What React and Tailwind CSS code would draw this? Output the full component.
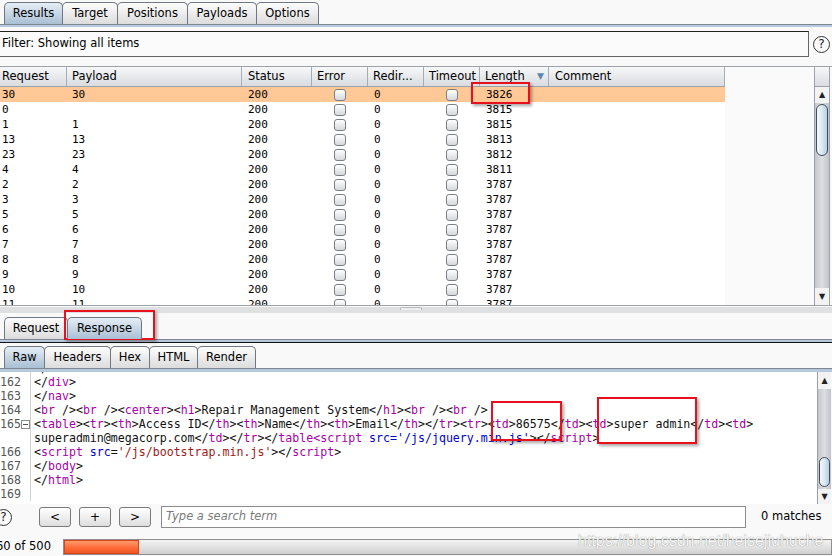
import React from 'react';

// top-level tabs (Intruder attack window)
const topTabs = [
  { label: 'Results', w: 'w-[59px]', active: true },
  { label: 'Target', w: 'w-[56px]' },
  { label: 'Positions', w: 'w-[71px]' },
  { label: 'Payloads', w: 'w-[70px]' },
  { label: 'Options', w: 'w-[63px]' },
];

const msgTabs = [
  { label: 'Request', w: 'w-[64px]' },
  { label: 'Response', w: 'w-[75px]', active: true },
];

const viewTabs = [
  { label: 'Raw', w: 'w-[41px]', active: true },
  { label: 'Headers', w: 'w-[67px]' },
  { label: 'Hex', w: 'w-[40px]' },
  { label: 'HTML', w: 'w-[49px]' },
  { label: 'Render', w: 'w-[59px]' },
];

const cols = [
  { name: 'Request', w: 'w-[67px]', pl: 'pl-[2px]' },
  { name: 'Payload', w: 'w-[175px]', pl: 'pl-[5px]' },
  { name: 'Status', w: 'w-[70px]', pl: 'pl-[6px]' },
  { name: 'Error', w: 'w-[56px]', pl: 'pl-[5px]' },
  { name: 'Redir...', w: 'w-[56px]', pl: 'pl-[5px]' },
  { name: 'Timeout', w: 'w-[56px]', pl: 'pl-[5px]' },
  { name: 'Length', w: 'w-[69px]', pl: 'pl-[5px]', sort: true },
  { name: 'Comment', w: 'w-[176px]', pl: 'pl-[6px]' },
];

const rows = [
  ['30', '30', '3826'],
  ['0', '', '3815'],
  ['1', '1', '3815'],
  ['13', '13', '3813'],
  ['23', '23', '3812'],
  ['4', '4', '3811'],
  ['2', '2', '3787'],
  ['3', '3', '3787'],
  ['5', '5', '3787'],
  ['6', '6', '3787'],
  ['7', '7', '3787'],
  ['8', '8', '3787'],
  ['9', '9', '3787'],
  ['10', '10', '3787'],
  ['11', '11', '3787'],
];

const tokColor = {
  p: 'text-[#111]',
  t: 'text-[#a800a8]',
  a: 'text-[#0000cc]',
  s: 'text-[#a01818]',
};

const code = [
  { n: '161', t: [['p', '</'], ['t', 'ul'], ['p', '>']] },
  { n: '162', t: [['p', '</'], ['t', 'div'], ['p', '>']] },
  { n: '163', t: [['p', '</'], ['t', 'nav'], ['p', '>']] },
  {
    n: '164',
    t: [
      ['p', '<'], ['t', 'br'], ['p', ' /><'], ['t', 'br'], ['p', ' /><'], ['t', 'center'],
      ['p', '><'], ['t', 'h1'], ['p', '>Repair Management System</'], ['t', 'h1'],
      ['p', '><'], ['t', 'br'], ['p', ' /><'], ['t', 'br'], ['p', ' />'],
    ],
  },
  {
    n: '165',
    fold: true,
    t: [
      ['p', '<'], ['t', 'table'], ['p', '><'], ['t', 'tr'], ['p', '><'], ['t', 'th'],
      ['p', '>Access ID</'], ['t', 'th'], ['p', '><'], ['t', 'th'], ['p', '>Name</'], ['t', 'th'],
      ['p', '><'], ['t', 'th'], ['p', '>Email</'], ['t', 'th'], ['p', '></'], ['t', 'tr'],
      ['p', '><'], ['t', 'tr'], ['p', '><'], ['t', 'td'], ['p', '>86575</'], ['t', 'td'],
      ['p', '><'], ['t', 'td'], ['p', '>super admin</'], ['t', 'td'], ['p', '><'], ['t', 'td'], ['p', '>'],
    ],
  },
  {
    n: '',
    t: [
      ['p', 'superadmin@megacorp.com</'], ['t', 'td'], ['p', '></'], ['t', 'tr'], ['p', '></'],
      ['t', 'table<script'], ['p', ' '], ['a', "src='/js/jquery.min.js'"], ['p', '></'], ['t', 'script'], ['p', '>'],
    ],
  },
  {
    n: '166',
    t: [
      ['p', '<'], ['t', 'script'], ['p', ' '], ['a', 'src'], ['p', '='], ['s', "'/js/bootstrap.min.js'"],
      ['p', '></'], ['t', 'script'], ['p', '>'],
    ],
  },
  { n: '167', t: [['p', '</'], ['t', 'body'], ['p', '>']] },
  { n: '168', t: [['p', '</'], ['t', 'html'], ['p', '>']] },
  { n: '169', t: [] },
];

function Tab({ label, w, active, first }) {
  return (
    <div
      className={`${w} h-[22px] flex items-center justify-center rounded-t-[5px] border border-b-0 border-[#6f7782] text-[11.5px] leading-none ${
        first ? '' : '-ml-px'
      } ${active ? 'relative z-10 bg-linear-to-b from-[#e6eef6] to-[#a9bfd4]' : 'bg-linear-to-b from-[#fdfdfd] to-[#dcdcdc]'}`}
    >
      {label}
    </div>
  );
}

function TabStrip({ tabs }) {
  return (
    <div className="flex items-end h-[22px] pl-[4px]">
      {tabs.map((t, i) => (
        <Tab key={t.label} {...t} first={i === 0} />
      ))}
    </div>
  );
}

function Check() {
  return <div className="w-[12px] h-[12px] rounded-[3px] border border-[#7b7f86] bg-linear-to-b from-white to-[#d6d8dc]" />;
}

function HelpIcon() {
  return (
    <div className="w-[17px] h-[17px] rounded-full border-[1.5px] border-[#333] flex items-center justify-center text-[12px] leading-none text-[#222]">
      ?
    </div>
  );
}

function ArrowBtn({ up, h }) {
  return (
    <div className={`${h} w-full flex items-center justify-center bg-[#f3f3f3] text-[8px] leading-none text-[#222]`}>
      {up ? '▲' : '▼'}
    </div>
  );
}

function VScroll({ upH, downH, thumbMt, thumbH }) {
  return (
    <div className="h-full w-full flex flex-col border-l border-[#9aa0a8]">
      <ArrowBtn up h={upH} />
      <div className="flex-1 bg-linear-to-r from-[#c4c7cc] via-[#dcdee1] to-[#c0c3c8] px-[1px]">
        <div
          className={`${thumbMt} ${thumbH} rounded-[7px] border border-[#3f4c5a] bg-linear-to-r from-[#f4f8fc] via-[#dbe8f4] to-[#b6cfe6]`}
        />
      </div>
      <ArrowBtn h={downH} />
    </div>
  );
}

function ResultsTable() {
  return (
    <div className="flex h-[240px] border-t border-b border-[#9ea3aa]">
      <div className="w-[814px] flex flex-col bg-[#fafafa] overflow-hidden">
        <div className="flex h-[20px] w-[725px] shrink-0 border-b border-[#9ea3aa] bg-linear-to-b from-[#f7f8f9] to-[#d9dce1] text-[11.5px]">
          {cols.map((c) => (
            <div
              key={c.name}
              className={`${c.w} ${c.pl} flex items-center justify-between pr-[4px] border-r border-[#a8adb5] whitespace-nowrap`}
            >
              <span>{c.name}</span>
              {c.sort && <span className="text-[9px] text-[#5f86ad]">▼</span>}
            </div>
          ))}
        </div>
        <div className="w-[725px] font-['DejaVu_Sans_Mono',monospace] text-[11px]">
          {rows.map((r, i) => (
            <div key={i} className={`flex h-[15px] leading-[15px] ${i === 0 ? 'bg-[#ffc896]' : 'bg-white'}`}>
              <div className="w-[67px] pl-[2px]">{r[0]}</div>
              <div className="w-[175px] pl-[5px]">{r[1]}</div>
              <div className="w-[70px] pl-[6px]">200</div>
              <div className="w-[56px] flex items-center justify-center">
                <Check />
              </div>
              <div className="w-[56px] pl-[6px]">0</div>
              <div className="w-[56px] flex items-center justify-center">
                <Check />
              </div>
              <div className="w-[69px] pl-[6px]">{r[2]}</div>
              <div className="w-[176px]" />
            </div>
          ))}
        </div>
      </div>
      <div className="w-[16px] flex flex-col border-r border-[#9ea3aa]">
        <div className="h-[20px] shrink-0 border-b border-l border-[#9ea3aa] bg-linear-to-b from-[#f7f8f9] to-[#d9dce1]" />
        <div className="flex-1">
          <VScroll upH="h-[16px]" downH="h-[17px]" thumbMt="mt-[1px]" thumbH="h-[52px]" />
        </div>
      </div>
    </div>
  );
}

function CodeView() {
  return (
    <div className="flex h-[132px]">
      <div className="w-[817px] bg-white overflow-hidden">
        <div className="-mt-[11px] font-['DejaVu_Sans_Mono',monospace] text-[11.6px]">
          {code.map((l, i) => (
            <div key={i} className="flex h-[14px] leading-[14px]">
              <div className="w-[31px] shrink-0 flex border-r border-[#d0d0d0] text-[#555]">
                <div className="w-[20px] pr-[1px] text-right whitespace-nowrap">{l.n}</div>
                <div className="w-[10px] flex items-center justify-center">
                  {l.fold && (
                    <div className="w-[9px] h-[9px] border border-[#8a8a8a] flex items-center justify-center">
                      <div className="w-[5px] h-px bg-[#555]" />
                    </div>
                  )}
                </div>
              </div>
              <div className="pl-[3px] whitespace-pre">
                {l.t.map(([k, s], j) => (
                  <span key={j} className={tokColor[k]}>
                    {s}
                  </span>
                ))}
              </div>
            </div>
          ))}
        </div>
      </div>
      <div className="w-[14px]">
        <VScroll upH="h-[17px]" downH="h-[15px]" thumbMt="mt-[68px]" thumbH="h-[30px]" />
      </div>
    </div>
  );
}

function Btn({ children }) {
  return (
    <div className="w-[32px] h-[20px] rounded-[3px] border border-[#7a7a7a] bg-linear-to-b from-white to-[#dedede] flex items-center justify-center text-[12px] leading-none">
      {children}
    </div>
  );
}

function RedBox({ className }) {
  return <div className={`absolute border-2 border-[#e8101c] shadow-[2px_2px_3px_rgba(0,0,0,0.35)] ${className}`} />;
}

export default function App() {
  return (
    <div className="relative w-[832px] h-[556px] overflow-hidden bg-[#f9f9f9] text-black font-['DejaVu_Sans',sans-serif]">
      {/* main tabs */}
      <div className="pt-[2px]">
        <TabStrip tabs={topTabs} />
      </div>
      <div className="h-[3px] bg-[#b6c8da] border-t border-[#7d8894]" />
      <div className="h-[4px]" />

      {/* filter */}
      <div className="flex h-[26px]">
        <div className="w-[809px] h-full border border-l-0 border-[#666] border-t-[#222] bg-[#fbfbfb] flex items-center pl-[2px] text-[11.5px]">
          Filter: Showing all items
        </div>
        <div className="flex-1 flex items-center justify-center pl-[2px]">
          <HelpIcon />
        </div>
      </div>
      <div className="h-[9px]" />

      <ResultsTable />

      {/* split pane divider */}
      <div className="h-[6px] bg-[#dfe0e2] pl-[400px]">
        <div className="w-[22px] h-[3px] mt-[1px] rounded-t-[2px] border border-b-0 border-[#b5b8bd] bg-[#eeeeee]" />
      </div>
      <div className="h-[4px]" />

      {/* request / response */}
      <TabStrip tabs={msgTabs} />
      <div className="h-[3px] bg-[#b6c8da] border-t border-[#7d8894]" />
      <div className="border-t border-[#111] pt-[3px]">
        <TabStrip tabs={viewTabs} />
      </div>
      <div className="h-[4px] bg-[#b6c8da] border-t border-[#7d8894]" />

      <CodeView />

      {/* search bar */}
      <div className="flex items-center h-[26px]">
        <div className="-ml-[5px] w-[17px]">
          <HelpIcon />
        </div>
        <div className="ml-[27px] flex gap-[8px]">
          <Btn>&lt;</Btn>
          <Btn>+</Btn>
          <Btn>&gt;</Btn>
        </div>
        <div className="ml-[10px] w-[585px] h-[22px] border border-[#8c8c8c] bg-white flex items-center pl-[4px] text-[11.5px] italic text-[#7a7a7a]">
          Type a search term
        </div>
        <div className="ml-[15px] text-[11.5px]">0 matches</div>
      </div>

      {/* progress */}
      <div className="flex items-center h-[16px] mt-[9px]">
        <div className="-ml-[4px] w-[67px] text-[11.5px] whitespace-nowrap">60 of 500</div>
        <div className="w-[770px] h-full border border-[#8f8f8f] bg-linear-to-b from-[#f2f2f2] via-[#e2e2e2] to-[#cfcfcf] flex">
          <div className="w-[75px] h-full border border-[#d8451a] bg-linear-to-b from-[#ff9a6c] via-[#ff6f3c] to-[#ee5522]" />
        </div>
      </div>

      {/* watermark */}
      <div className="absolute left-[578px] top-[529px] text-[16px] font-['Liberation_Sans',Arial,sans-serif] text-[#fafafa] [text-shadow:0_0_1px_rgba(0,0,0,0.55)] whitespace-nowrap">
        https://blog.csdn.net/heisejiuhuche
      </div>

      {/* annotations */}
      <RedBox className="left-[471px] top-[82px] w-[59px] h-[22px]" />
      <RedBox className="left-[64px] top-[310px] w-[91px] h-[30px]" />
      <RedBox className="left-[491px] top-[401px] w-[71px] h-[40px]" />
      <RedBox className="left-[597px] top-[397px] w-[100px] h-[47px]" />
    </div>
  );
}
